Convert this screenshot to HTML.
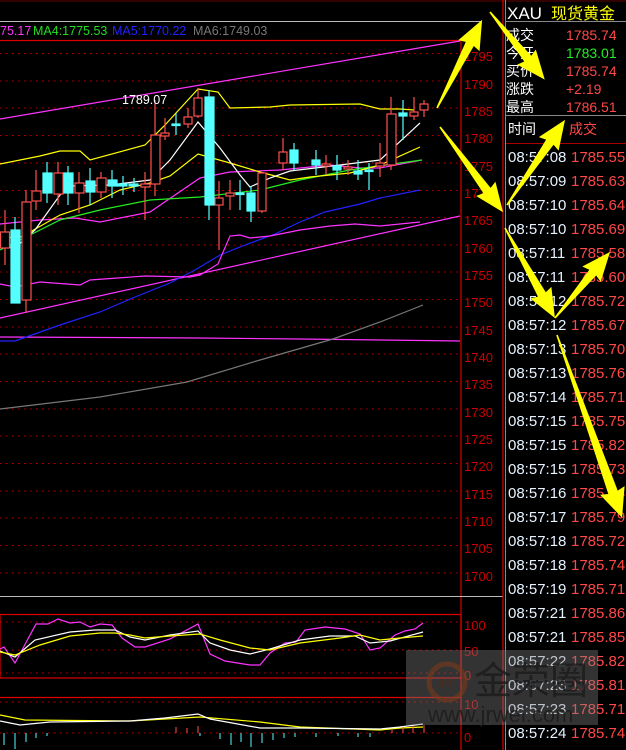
<!DOCTYPE html>
<html><head><meta charset="utf-8"><style>
html,body{margin:0;padding:0;background:#000;width:626px;height:750px;overflow:hidden}
svg{display:block}
text{font-family:"Liberation Sans","Noto Sans CJK SC",sans-serif}
</style></head><body>
<svg width="626" height="750" viewBox="0 0 626 750" xmlns="http://www.w3.org/2000/svg">
<rect width="626" height="750" fill="#000"/>
<line x1="0" y1="1" x2="626" y2="1" stroke="#600" stroke-width="1"/>
<line x1="0" y1="21.5" x2="481" y2="21.5" stroke="#bbb" stroke-width="1"/>
<line x1="0" y1="40.5" x2="461" y2="40.5" stroke="#d00" stroke-width="1.2"/>
<line x1="461" y1="40" x2="461" y2="750" stroke="#d00" stroke-width="1.2"/>
<line x1="0" y1="596.5" x2="503" y2="596.5" stroke="#bbb"/>
<line x1="503" y1="0" x2="503" y2="750" stroke="#d00" stroke-width="1.2"/>
<line x1="505.5" y1="0" x2="505.5" y2="750" stroke="#888" stroke-width="1"/>
<text x="0" y="35" font-size="12.5" fill="#ff33ff">75.17</text>
<text x="33" y="35" font-size="12.5" fill="#22dd22">MA4:1775.53</text>
<text x="112" y="35" font-size="12.5" fill="#2222ff">MA5:1770.22</text>
<text x="193" y="35" font-size="12.5" fill="#777">MA6:1749.03</text>
<g stroke="#b00" stroke-width="1" stroke-dasharray="1.5,4.5">
<line x1="0" y1="53.5" x2="460" y2="53.5"/><line x1="0" y1="81" x2="460" y2="81"/>
<line x1="0" y1="108" x2="460" y2="108"/><line x1="0" y1="135.5" x2="460" y2="135.5"/>
<line x1="0" y1="163" x2="460" y2="163"/><line x1="0" y1="190.5" x2="460" y2="190.5"/>
<line x1="0" y1="217.5" x2="460" y2="217.5"/><line x1="0" y1="245" x2="460" y2="245"/>
<line x1="0" y1="272" x2="460" y2="272"/><line x1="0" y1="299.5" x2="460" y2="299.5"/>
<line x1="0" y1="327" x2="460" y2="327"/><line x1="0" y1="354" x2="460" y2="354"/>
<line x1="0" y1="381.5" x2="460" y2="381.5"/><line x1="0" y1="409" x2="460" y2="409"/>
<line x1="0" y1="436" x2="460" y2="436"/><line x1="0" y1="463.5" x2="460" y2="463.5"/>
<line x1="0" y1="491" x2="460" y2="491"/><line x1="0" y1="518" x2="460" y2="518"/>
<line x1="0" y1="545.5" x2="460" y2="545.5"/><line x1="0" y1="573" x2="460" y2="573"/>
<line x1="0" y1="622" x2="460" y2="622"/><line x1="0" y1="650" x2="460" y2="650"/>
<line x1="0" y1="673" x2="460" y2="673"/><line x1="0" y1="702" x2="460" y2="702"/>
<line x1="0" y1="733" x2="460" y2="733"/>
</g>
<g font-size="13" fill="#c00">
<text x="464" y="61">1795</text><text x="464" y="89">1790</text><text x="464" y="116">1785</text>
<text x="464" y="143">1780</text><text x="464" y="171">1775</text><text x="464" y="198">1770</text>
<text x="464" y="225">1765</text><text x="464" y="253">1760</text><text x="464" y="280">1755</text>
<text x="464" y="307">1750</text><text x="464" y="335">1745</text><text x="464" y="362">1740</text>
<text x="464" y="389">1735</text><text x="464" y="417">1730</text><text x="464" y="444">1725</text>
<text x="464" y="471">1720</text><text x="464" y="499">1715</text><text x="464" y="526">1710</text>
<text x="464" y="553">1705</text><text x="464" y="581">1700</text>
<text x="464" y="630">100</text><text x="464" y="656">50</text><text x="464" y="680">0</text>
<text x="464" y="709">10</text><text x="464" y="742">0</text>
</g>
<g fill="none" stroke-width="1.2">
<polyline stroke="#ff33ff" points="0,119 460,41"/>
<polyline stroke="#ff33ff" points="0,318 460,216"/>
<polyline stroke="#ff33ff" points="0,337 200,338 300,339 460,341"/>
<polyline stroke="#777" points="0,409 100,397 187,382 260,360 333,339 380,322 423,305"/>
<polyline stroke="#2222ff" points="0,341 15,341 60,325 100,312 135,297 170,283 195,270 220,255 245,245 275,234 300,222 325,212 360,204 380,198 420,190"/>
<polyline stroke="#ff33ff" points="0,284 15,287 40,282 80,285 90,280 145,276 190,277 200,275 218,264 230,236 240,235 250,238 270,236 300,230 330,226 355,224 380,226 420,222"/>
<polyline stroke="#ff33ff" points="0,224 40,220 75,218 100,222 150,212 200,178 230,172 280,170 330,165 360,168 380,168 422,160"/>
<polyline stroke="#22ee22" points="0,250 30,235 60,220 100,210 150,200 200,197 260,190 300,180 350,170 400,163 422,160"/>
<polyline stroke="#ffff00" points="0,164 40,156 60,151 80,151 90,160 145,145 165,125 198,89 218,92 230,108 270,107 290,105 360,104 380,109 400,109 414,110"/>
<polyline stroke="#ffff00" points="0,232 15,240 30,232 60,215 90,205 120,190 150,183 170,176 198,154 230,163 260,172 290,180 310,177 350,173 380,165 420,147"/>
<polyline stroke="#fff" points="0,245 15,248 35,230 60,195 70,186 110,185 150,180 170,160 198,122 220,148 240,175 250,187 270,178 290,171 340,165 380,160 420,123"/>
</g>
<g stroke="#ff5050" stroke-width="1.2" fill="#000">
<line x1="5" y1="210" x2="5" y2="265"/><rect x="0.5" y="232" width="9" height="16"/>
<line x1="26" y1="190" x2="26" y2="313"/><rect x="22" y="202" width="9" height="98"/>
<line x1="36" y1="170" x2="36" y2="210"/><rect x="32" y="191" width="9" height="10"/>
<line x1="58" y1="162" x2="58" y2="205"/><rect x="54" y="173" width="9" height="21"/>
<line x1="79" y1="172" x2="79" y2="213"/><rect x="75" y="183" width="9" height="10"/>
<line x1="101" y1="172" x2="101" y2="198"/><rect x="97" y="178" width="9" height="14"/>
<line x1="145" y1="172" x2="145" y2="220"/><rect x="141" y="184" width="9" height="3"/>
<line x1="155" y1="100" x2="155" y2="196"/><rect x="151" y="135" width="9" height="49"/>
<line x1="165" y1="118" x2="165" y2="140"/><rect x="161" y="133" width="8" height="3"/>
<line x1="188" y1="108" x2="188" y2="128"/><rect x="184" y="117" width="8" height="7"/>
<line x1="198" y1="88" x2="198" y2="118"/><rect x="194" y="98" width="8" height="18"/>
<line x1="219" y1="181" x2="219" y2="250"/><rect x="215" y="198" width="8" height="7"/>
<line x1="230" y1="180" x2="230" y2="210"/><rect x="226" y="193" width="8" height="3"/>
<line x1="262" y1="172" x2="262" y2="213"/><rect x="258" y="173" width="8" height="38"/>
<line x1="283" y1="138" x2="283" y2="170"/><rect x="279" y="152" width="8" height="11"/>
<line x1="326" y1="155" x2="326" y2="175"/><rect x="322" y="164" width="8" height="2"/>
<line x1="348" y1="160" x2="348" y2="175"/><rect x="344" y="167" width="8" height="2"/>
<line x1="380" y1="143" x2="380" y2="177"/><rect x="376" y="163" width="8" height="3"/>
<line x1="391" y1="97" x2="391" y2="170"/><rect x="387" y="114" width="9" height="51"/>
<line x1="414" y1="97" x2="414" y2="120"/><rect x="410" y="112" width="8" height="4"/>
<line x1="424" y1="100" x2="424" y2="117"/><rect x="420" y="104" width="8" height="6"/>
</g>
<g stroke="#55ffff" stroke-width="1.2" fill="#55ffff">
<line x1="15" y1="217" x2="15" y2="303"/><rect x="11" y="230" width="9" height="73"/>
<line x1="47" y1="162" x2="47" y2="203"/><rect x="43" y="173" width="9" height="20"/>
<line x1="68" y1="166" x2="68" y2="205"/><rect x="64" y="173" width="9" height="20"/>
<line x1="90" y1="168" x2="90" y2="205"/><rect x="86" y="181" width="9" height="11"/>
<line x1="112" y1="170" x2="112" y2="198"/><rect x="108" y="180" width="9" height="6"/>
<line x1="123" y1="176" x2="123" y2="195"/><rect x="118" y="184" width="9" height="2"/>
<line x1="134" y1="178" x2="134" y2="192"/><rect x="129" y="184" width="9" height="2"/>
<line x1="176" y1="113" x2="176" y2="135"/><rect x="172" y="124" width="8" height="1.5"/>
<line x1="209" y1="90" x2="209" y2="220"/><rect x="205" y="97" width="9" height="108"/>
<line x1="240" y1="180" x2="240" y2="210"/><rect x="236" y="193" width="8" height="1.5"/>
<line x1="251" y1="186" x2="251" y2="222"/><rect x="247" y="193" width="8" height="18"/>
<line x1="294" y1="143" x2="294" y2="170"/><rect x="290" y="150" width="8" height="13"/>
<line x1="316" y1="150" x2="316" y2="175"/><rect x="312" y="160" width="8" height="5"/>
<line x1="337" y1="155" x2="337" y2="180"/><rect x="333" y="166" width="8" height="4"/>
<line x1="358" y1="160" x2="358" y2="180"/><rect x="354" y="171" width="8" height="3"/>
<line x1="369" y1="163" x2="369" y2="190"/><rect x="365" y="170" width="8" height="1.5"/>
<line x1="403" y1="100" x2="403" y2="140"/><rect x="399" y="113" width="8" height="3"/>
</g>
<text x="122" y="104" font-size="12.5" fill="#fff">1789.07</text>
<rect x="0" y="614.5" width="461" height="63.5" fill="none" stroke="#d00" stroke-width="1.2"/>
<g fill="none" stroke-width="1.2">
<polyline stroke="#ff33ff" points="0,649 4,647 15,663 36,624 48,624 58,619 70,623 80,622 90,627 100,624 112,625 122,638 135,647 145,647 170,639 198,624 210,654 225,661 250,665 260,665 270,653 285,643 296,642 305,630 325,627 345,629 360,634 370,650 380,648 395,635 405,631 415,629 423,623"/>
<polyline stroke="#fff" points="0,651 15,657 35,640 70,632 95,630 115,630 130,637 145,640 170,635 198,631 210,643 230,650 250,654 270,649 300,640 330,636 355,636 370,643 390,641 423,632"/>
<polyline stroke="#ffff00" points="0,652 15,655 40,645 70,636 100,633 115,633 130,635 145,638 170,636 200,634 220,640 250,648 270,650 300,643 340,638 360,635 380,640 400,638 423,636"/>
</g>
<line x1="0" y1="697.5" x2="461" y2="697.5" stroke="#d00" stroke-width="1.2"/>
<g fill="none" stroke-width="1.2">
<polyline stroke="#ffff00" points="0,715 25,720 130,721 200,717 260,722 300,727 380,730 400,728 423,727"/>
<polyline stroke="#fff" points="0,721 20,725 50,722 130,721 165,718 198,714 210,719 260,728 300,728 380,729 400,727 423,724"/>
</g>
<g stroke="#55ffff" stroke-width="1">
<line x1="4" y1="733" x2="4" y2="745"/><line x1="15" y1="733" x2="15" y2="749"/><line x1="26" y1="733" x2="26" y2="742"/>
<line x1="36" y1="733" x2="36" y2="738"/><line x1="47" y1="733" x2="47" y2="736"/><line x1="231" y1="733" x2="231" y2="745"/>
<line x1="241" y1="733" x2="241" y2="742"/><line x1="251" y1="733" x2="251" y2="747"/><line x1="262" y1="733" x2="262" y2="743"/>
<line x1="273" y1="733" x2="273" y2="740"/><line x1="284" y1="733" x2="284" y2="738"/><line x1="295" y1="733" x2="295" y2="737"/>
<line x1="316" y1="733" x2="316" y2="737"/><line x1="338" y1="733" x2="338" y2="736"/><line x1="358" y1="733" x2="358" y2="737"/>
<line x1="370" y1="733" x2="370" y2="737"/><line x1="220" y1="733" x2="220" y2="739"/><line x1="200" y1="733" x2="200" y2="736"/>
</g>
<g stroke="#ff5050" stroke-width="1">
<line x1="176" y1="733" x2="176" y2="727"/><line x1="187" y1="733" x2="187" y2="728"/><line x1="198" y1="733" x2="198" y2="726"/>
<line x1="392" y1="733" x2="392" y2="730"/><line x1="403" y1="733" x2="403" y2="727"/><line x1="413" y1="733" x2="413" y2="726"/><line x1="424" y1="733" x2="424" y2="725"/>
</g>
<line x1="506" y1="21.5" x2="626" y2="21.5" stroke="#888"/>
<line x1="506" y1="115.5" x2="626" y2="115.5" stroke="#888"/>
<line x1="506" y1="143.5" x2="626" y2="143.5" stroke="#a00"/>
<text x="507" y="19" font-size="17" fill="#fff">XAU</text>
<text x="551" y="19" font-size="16" fill="#ffff00">现货黄金</text>
<g font-size="14">
<text x="506" y="40" fill="#fff">成交</text><text x="566" y="40" fill="#ff4848">1785.74</text>
<text x="506" y="58" fill="#fff">今开</text><text x="566" y="58" fill="#22ee22">1783.01</text>
<text x="506" y="76" fill="#fff">买价</text><text x="566" y="76" fill="#ff4848">1785.74</text>
<text x="506" y="94" fill="#fff">涨跌</text><text x="566" y="94" fill="#ff4848">+2.19</text>
<text x="506" y="112" fill="#fff">最高</text><text x="566" y="112" fill="#ff4848">1786.51</text>
<text x="508" y="134" fill="#fff">时间</text><text x="569" y="134" fill="#ff4848">成交</text>
</g>
<g font-size="15" fill="#e6f2ff">
<text x="508" y="162">08:57:08</text><text x="508" y="186">08:57:09</text><text x="508" y="210">08:57:10</text>
<text x="508" y="234">08:57:10</text><text x="508" y="258">08:57:11</text><text x="508" y="282">08:57:11</text>
<text x="508" y="306">08:57:12</text><text x="508" y="330">08:57:12</text><text x="508" y="354">08:57:13</text>
<text x="508" y="378">08:57:13</text><text x="508" y="402">08:57:14</text><text x="508" y="426">08:57:15</text>
<text x="508" y="450">08:57:15</text><text x="508" y="474">08:57:15</text><text x="508" y="498">08:57:16</text>
<text x="508" y="522">08:57:17</text><text x="508" y="546">08:57:18</text><text x="508" y="570">08:57:18</text>
<text x="508" y="594">08:57:19</text><text x="508" y="618">08:57:21</text><text x="508" y="642">08:57:21</text>
<text x="508" y="666">08:57:22</text><text x="508" y="690">08:57:23</text><text x="508" y="714">08:57:23</text>
<text x="508" y="738">08:57:24</text>
</g>
<g font-size="15" fill="#ff4848">
<text x="571" y="162">1785.55</text><text x="571" y="186">1785.63</text><text x="571" y="210">1785.64</text>
<text x="571" y="234">1785.69</text><text x="571" y="258">1785.58</text><text x="571" y="282">1785.60</text>
<text x="571" y="306">1785.72</text><text x="571" y="330">1785.67</text><text x="571" y="354">1785.70</text>
<text x="571" y="378">1785.76</text><text x="571" y="402">1785.71</text><text x="571" y="426">1785.75</text>
<text x="571" y="450">1785.82</text><text x="571" y="474">1785.73</text><text x="571" y="498">1785.74</text>
<text x="571" y="522">1785.79</text><text x="571" y="546">1785.72</text><text x="571" y="570">1785.74</text>
<text x="571" y="594">1785.71</text><text x="571" y="618">1785.86</text><text x="571" y="642">1785.85</text>
<text x="571" y="666">1785.82</text><text x="571" y="690">1785.81</text><text x="571" y="714">1785.71</text>
<text x="571" y="738">1785.74</text>
</g>
<rect x="406" y="650" width="192" height="75" fill="#808080" fill-opacity="0.4"/>
<circle cx="447" cy="682" r="18" fill="none" stroke="#7a3a1a" stroke-width="5" stroke-opacity="0.6"/>
<text x="438" y="688" font-size="12" fill="#5a2a10" fill-opacity="0.7">JR</text>
<text x="474" y="694" font-size="38" fill="#1a1a1a" fill-opacity="0.8">金荣圈</text>
<text x="428" y="722" font-size="22" fill="#1a1a1a" fill-opacity="0.8">www.jrwei.com</text>
<g fill="#ffff00">
<polygon transform="translate(437,108) rotate(-62.9)" points="0,-0.8 72,-4.5 70,-12 99,0 70,12 72,4.5 0,0.8"/>
<polygon transform="translate(490,12) rotate(51)" points="0,-0.8 60,-4.5 58,-12 87,0 58,12 60,4.5 0,0.8"/>
<polygon transform="translate(440,127) rotate(53.5)" points="0,-0.8 79,-4.5 77,-12 106,0 77,12 79,4.5 0,0.8"/>
<polygon transform="translate(507,205) rotate(-55.7)" points="0,-0.8 76,-4.5 74,-12 103,0 74,12 76,4.5 0,0.8"/>
<polygon transform="translate(505,228) rotate(61)" points="0,-0.8 76,-4.5 74,-12 103,0 74,12 76,4.5 0,0.8"/>
<polygon transform="translate(555,318) rotate(-50.2)" points="0,-0.8 59,-4.5 57,-12 86,0 57,12 59,4.5 0,0.8"/>
<polygon transform="translate(557,335) rotate(70.4)" points="0,-0.8 167,-5 165,-13 194,0 165,13 167,5 0,0.8"/>
</g>
</svg>
</body></html>
